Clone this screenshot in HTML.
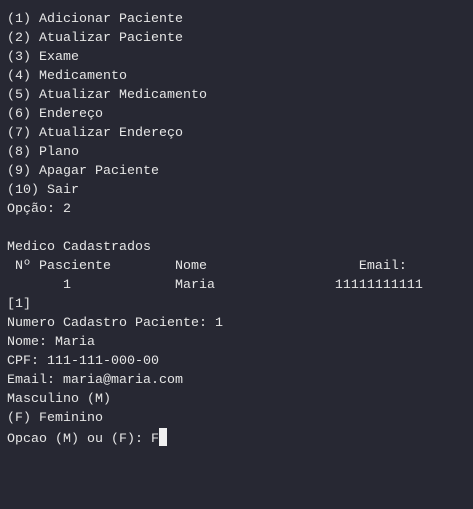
<!DOCTYPE html>
<html><head><meta charset="utf-8"><style>
html,body{margin:0;padding:0;background:#272833;width:473px;height:509px;overflow:hidden}
pre{margin:0;position:absolute;left:7px;top:10px;font-family:"Liberation Mono",monospace;font-size:13.33px;line-height:19px;color:#e6e6e6}
.c{background:#f0f0f0;display:inline-block;width:8px;height:18px;vertical-align:-4px}
</style></head><body><pre>(1) Adicionar Paciente
(2) Atualizar Paciente
(3) Exame
(4) Medicamento
(5) Atualizar Medicamento
(6) Endereço
(7) Atualizar Endereço
(8) Plano
(9) Apagar Paciente
(10) Sair
Opção: 2

Medico Cadastrados
 Nº Pasciente        Nome                   Email:
       1             Maria               11111111111
[1]
Numero Cadastro Paciente: 1
Nome: Maria
CPF: 111-111-000-00
Email: maria@maria.com
Masculino (M)
(F) Feminino
Opcao (M) ou (F): F<span class="c"></span></pre></body></html>
